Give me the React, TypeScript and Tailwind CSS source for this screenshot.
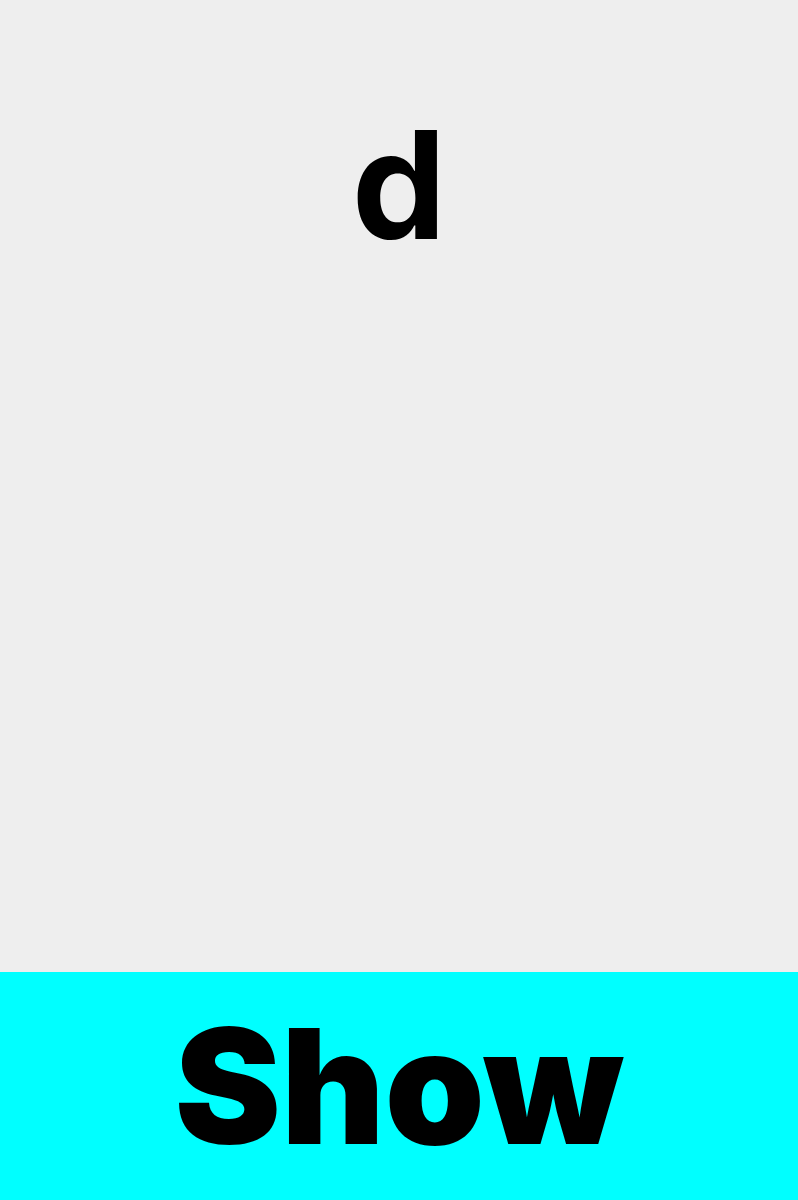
export default function App() {
  return (
    <div className="flex h-[1200px] w-full flex-col bg-[#eeeeee] font-['Inter',sans-serif] text-black">
      <div className="flex flex-1 justify-center">
        <span className="mt-[110px] text-[150px] font-bold leading-[1]">d</span>
      </div>
      <div className="flex h-[228px] items-center justify-center bg-[#00ffff]">
        <span className="text-[160px] font-black leading-[1] tracking-[0px]">Show</span>
      </div>
    </div>
  )
}
